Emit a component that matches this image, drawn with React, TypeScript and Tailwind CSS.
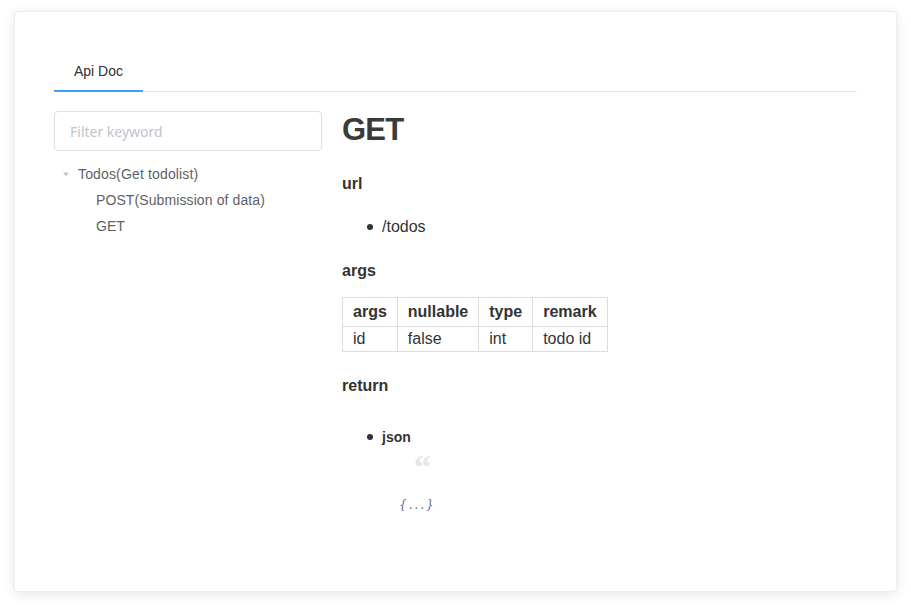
import React from "react";

export default function App() {
  return (
    <div className="w-[911px] h-[606px] bg-white pt-[11px] px-[14px]" style={{ fontFamily: '"Liberation Sans", Arial, sans-serif' }}>
      <div className="w-[883px] h-[581px] bg-white rounded-[4px] border border-[#ebeef5] shadow-[0_2px_12px_0_rgba(0,0,0,0.1)] px-[39px] pt-[39px]">
        {/* Tabs */}
        <div className="relative flex h-[41px] border-b border-[#e4e7ed]">
          <div className="h-[40px] px-5 flex items-center text-[14px] text-[#303133]">Api Doc</div>
          <div className="absolute left-0 bottom-[-1px] w-[89px] h-[2px] bg-[#409eff]" />
        </div>
        <div className="flex mt-[19px]">
          {/* Left */}
          <div className="w-[268px] shrink-0">
            <div className="h-[40px] rounded-[4px] border border-[#dcdfe6] flex items-center px-[15px]">
              <span className="text-[14px] text-[#c0c4cc]" style={{ fontFamily: '"Noto Sans", "Open Sans", sans-serif' }}>Filter keyword</span>
            </div>
            <div className="mt-[10px] text-[14px] text-[#606266]">
              <div className="h-[26px] flex items-center">
                <span className="w-[24px] flex justify-center">
                  <svg width="8" height="5" viewBox="0 0 8 5"><path d="M1 0.5 L7 0.5 L4 4.5 Z" fill="#c0c4cc" /></svg>
                </span>
                <span className="tracking-[0.15px]">Todos(Get todolist)</span>
              </div>
              <div className="h-[26px] flex items-center pl-[42px] tracking-[0.1px]">POST(Submission of data)</div>
              <div className="h-[26px] flex items-center pl-[42px]">GET</div>
            </div>
          </div>
          {/* Right */}
          <div className="ml-[20px] text-[#333]">
            <h1 className="text-[31px] font-bold leading-[37px] tracking-[-0.8px] text-[#3a3a3a]">GET</h1>
            <h3 className="mt-[27px] text-[16px] font-bold leading-[18px]">url</h3>
            <div className="mt-[25px] flex items-center text-[16px] leading-[18px]">
              <span className="ml-[25px] w-[6px] h-[6px] rounded-full bg-[#333]" />
              <span className="ml-[9px]">/todos</span>
            </div>
            <h3 className="mt-[26px] text-[16px] font-bold leading-[18px]">args</h3>
            <table className="mt-[17px] border-collapse text-[16px]">
              <thead>
                <tr className="h-[29px]">
                  <th className="border border-[#ddd] px-[10px] text-left font-bold">args</th>
                  <th className="border border-[#ddd] px-[10px] text-left font-bold">nullable</th>
                  <th className="border border-[#ddd] px-[10px] text-left font-bold">type</th>
                  <th className="border border-[#ddd] px-[10px] text-left font-bold">remark</th>
                </tr>
              </thead>
              <tbody>
                <tr className="h-[25px]">
                  <td className="border border-[#ddd] px-[10px]">id</td>
                  <td className="border border-[#ddd] px-[10px]">false</td>
                  <td className="border border-[#ddd] px-[10px]">int</td>
                  <td className="border border-[#ddd] px-[10px]">todo id</td>
                </tr>
              </tbody>
            </table>
            <h3 className="mt-[25px] text-[16px] font-bold leading-[18px]">return</h3>
            <div className="mt-[34px] flex items-center text-[14px] leading-[16px] font-bold">
              <span className="ml-[25px] w-[6px] h-[6px] rounded-full bg-[#333]" />
              <span className="ml-[9px]">json</span>
            </div>
            <div className="ml-[72px] mt-[5px] h-[22px] text-[34px] leading-[34px] font-bold text-[#e6e6e6]" style={{ fontFamily: '"Liberation Serif", serif' }}>“</div>
            <div className="ml-[57px] mt-[24px] text-[12px] italic text-[#5a6a8a] tracking-[2px]" style={{ fontFamily: '"DejaVu Serif", serif' }}>{"{...}"}</div>
          </div>
        </div>
      </div>
    </div>
  );
}
